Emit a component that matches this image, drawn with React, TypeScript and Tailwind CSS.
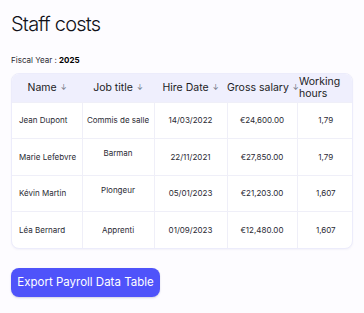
import React from "react";

interface Staff {
  name: string;
  job: string;
  hired: string;
  salary: string;
  hours: string;
  raised?: boolean;
}

const staff: Staff[] = [
  { name: "Jean Dupont", job: "Commis de salle", hired: "14/03/2022", salary: "€24,600.00", hours: "1,79" },
  { name: "Marie Lefebvre", job: "Barman", hired: "22/11/2021", salary: "€27,850.00", hours: "1,79", raised: true },
  { name: "Kévin Martin", job: "Plongeur", hired: "05/01/2023", salary: "€21,203.00", hours: "1,607", raised: true },
  { name: "Léa Bernard", job: "Apprenti", hired: "01/09/2023", salary: "€12,480.00", hours: "1,607" },
];

function SortHeader({ label }: { label: string }) {
  return (
    <span className="inline-flex items-center gap-1">
      {label}
      <span className="text-[7px] text-gray-500">↓</span>
    </span>
  );
}

export default function App() {
  return (
    <div
      className="w-[364px] h-[313px] bg-[#fdfcff] px-[11px] pt-[11px] text-[#1c1c24]"
      style={{ fontFamily: "Inter, 'Noto Sans', sans-serif" }}
    >
      <h1 className="text-[20px] font-light tracking-[-0.8px] leading-[26px] text-[#111118]">Staff costs</h1>
      <p className="mt-[18px] text-[8px] leading-[10px] text-[#2a2a33]">
        Fiscal Year : <span className="font-bold text-black">2025</span>
      </p>

      {/* Table */}
      <div className="mt-[8px] w-[342px] rounded-[8px] border border-[#ececfb] overflow-hidden bg-white shadow-[0_1px_2px_rgba(80,80,160,0.06)]">
        <table className="w-full border-collapse table-fixed">
          <colgroup>
            <col className="w-[70px]" />
            <col className="w-[72px]" />
            <col className="w-[73px]" />
            <col className="w-[70px]" />
            <col className="w-[57px]" />
          </colgroup>
          <thead>
            <tr className="h-[28px] bg-[#efeffd] text-[10.5px] leading-[12px] text-[#1c1c24]">
              <th className="font-normal"><SortHeader label="Name" /></th>
              <th className="font-normal"><SortHeader label="Job title" /></th>
              <th className="font-normal"><SortHeader label="Hire Date" /></th>
              <th className="font-normal whitespace-nowrap"><SortHeader label="Gross salary" /></th>
              <th className="font-normal text-left pl-[2px]">Working<br />hours</th>
            </tr>
          </thead>
          <tbody className="text-[8px] leading-[10px] text-[#2a2a33]">
            {staff.map((s) => (
              <tr key={s.name} className="h-[36.5px] border-t border-[#efeff8]">
                <td className="pl-[7px] text-left">{s.name}</td>
                <td className={`border-l border-[#efeff8] text-center ${s.raised ? "align-top pt-[9px]" : ""}`}>{s.job}</td>
                <td className="border-l border-[#efeff8] text-center">{s.hired}</td>
                <td className="border-l border-[#efeff8] text-center">{s.salary}</td>
                <td className="border-l border-[#efeff8] text-center">{s.hours}</td>
              </tr>
            ))}
          </tbody>
        </table>
      </div>

      <button className="mt-[19px] h-[29px] w-[149px] rounded-[8px] bg-[#4f53fa] text-white text-[11.5px] shadow-[0_1px_2px_rgba(40,40,120,0.2)]">
        Export Payroll Data Table
      </button>
    </div>
  );
}
